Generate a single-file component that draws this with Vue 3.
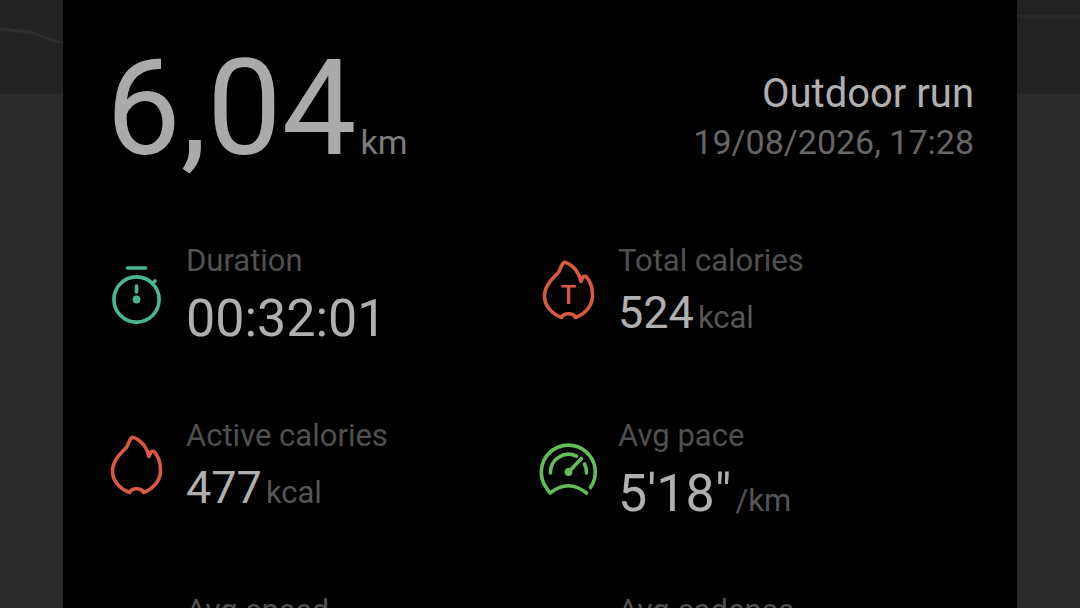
<script setup>
const metrics = [
  { icon: 'timer', label: 'Duration', value: '00:32:01', unit: '', large: true },
  { icon: 'total', label: 'Total calories', value: '524', unit: 'kcal', large: false },
  { icon: 'active', label: 'Active calories', value: '477', unit: 'kcal', large: false },
  { icon: 'pace', label: 'Avg pace', value: '5\'18"', unit: '/km', large: true },
  { icon: 'speed', label: 'Avg speed', value: '', unit: '', large: false },
  { icon: 'cadence', label: 'Avg cadence', value: '', unit: '', large: false },
]
</script>

<template>
  <div class="page">
    <div class="side" aria-hidden="true">
      <div class="map left">
        <svg class="trail" viewBox="0 0 63 94" preserveAspectRatio="none">
          <path d="M0 29C12 30 24 32 34 33C43 37 52 41 63 43" />
        </svg>
      </div>
    </div>
    <main class="panel">
      <header class="summary">
        <h1 class="distance"><span class="number">6,04</span><span class="km">km</span></h1>
        <div class="info">
          <p class="activity">Outdoor run</p>
          <time class="date" datetime="2026-08-19T17:28">19/08/2026, 17:28</time>
        </div>
      </header>
      <dl class="metrics">
        <div v-for="m in metrics" :key="m.label" class="metric">
          <svg class="icon" :class="m.icon" viewBox="0 0 60 60" aria-hidden="true">
            <g v-if="m.icon === 'timer'">
              <path d="M21.500 2H39.500" />
              <circle cx="30.500" cy="33.500" r="22.600" />
              <path d="M46.500 17.500L49 15M30.500 20V26" />
              <circle class="dot" cx="30.500" cy="33.500" r="3.900" />
            </g>
            <g v-else-if="m.icon === 'pace'">
              <path d="M52.500 46.500A27 27 0 1 0 8.500 47L12 52Q30.500 37.500 48.500 52" />
              <path d="M12.500 32A18 18 0 0 1 38.500 15.200M46.500 23Q48.500 27 48.500 32M30.500 31L43.500 17.500" />
              <circle class="dot" cx="30.500" cy="31" r="3.900" />
            </g>
            <g v-else-if="m.icon === 'total' || m.icon === 'active'">
              <path d="M26.500 1.200C23 3 23 8 20 12C14 18 6.500 25 6.500 35C6.500 45 14 53 23.500 56.500C25.500 51.500 35.500 51.500 37.500 56.500C47 53 54.500 45 54.500 34.500C54.500 26 51.500 19 48 15.500Q45 14.500 44.500 17L43 20.500C42 16 40.500 12.500 37.500 8.500C33.500 4 30 2 26.500 1.200Z" />
              <text v-if="m.icon === 'total'" x="30.500" y="43" text-anchor="middle">T</text>
            </g>
          </svg>
          <div class="text">
            <dt>{{ m.label }}</dt>
            <dd :class="{ large: m.large }">
              <span v-if="m.value" class="value">{{ m.value }}</span><span v-if="m.unit" class="unit">{{ m.unit }}</span>
            </dd>
          </div>
        </div>
      </dl>
    </main>
    <div class="side" aria-hidden="true">
      <div class="map right"></div>
    </div>
  </div>
</template>

<style>
body {
  margin: 0;
  background: #2a2a2a;
}
</style>

<style scoped>
.page {
  display: grid;
  grid-template-columns: 63px minmax(0, 1fr) 63px;
  height: 100vh;
  overflow: hidden;
  background: #2a2a2a;
  font-family: Roboto, "Liberation Sans", sans-serif;
}
.map {
  height: 94px;
  background: #222;
}
.left {
  border-bottom-right-radius: 4px;
}
.right {
  box-sizing: border-box;
  padding-top: 15px;
}
.right::before {
  content: "";
  display: block;
  height: 3px;
  background: #292929;
}
.trail {
  display: block;
  width: 100%;
  height: 100%;
  fill: none;
  stroke: #2d2d2d;
  stroke-width: 3;
}
.panel {
  padding: 31px 43px 0;
  background: #000;
}
.summary {
  display: flex;
  justify-content: space-between;
  align-items: last baseline;
}
.distance,
.activity,
.metrics,
dd {
  margin: 0;
}
.distance {
  display: flex;
  align-items: baseline;
  gap: 4px;
  font-weight: 400;
}
.number {
  font-size: 133px;
  color: #aaa;
}
.km {
  font-size: 34px;
  color: #7c7c7c;
}
.info {
  display: flex;
  flex-direction: column;
  align-items: flex-end;
  gap: 5px;
}
.activity {
  font-size: 40px;
  color: #b0b0b0;
}
.date {
  font-size: 34px;
  color: #666;
}
.metrics {
  display: grid;
  grid-template-columns: 1fr 1fr;
  grid-auto-rows: minmax(107px, auto);
  row-gap: 68px;
  align-items: start;
  padding: 56px 4px 0 0;
}
.metric {
  display: flex;
  align-items: center;
  gap: 20px;
}
.icon {
  flex: none;
  width: 60px;
  height: 60px;
  overflow: visible;
  fill: none;
  stroke: currentColor;
  stroke-width: 3.6;
  stroke-linecap: round;
  stroke-linejoin: round;
}
.dot,
.icon text {
  fill: currentColor;
  stroke: none;
}
.icon text {
  font-size: 26px;
  font-weight: 500;
}
.timer {
  color: #49b693;
}
.total,
.active {
  color: #da5941;
}
.pace {
  color: #63bd58;
}
dt {
  font-size: 31px;
  color: #505050;
}
dd {
  display: flex;
  align-items: baseline;
  gap: 4px;
  min-height: 53px;
  margin-top: 7px;
}
dd.large {
  margin-top: 9px;
}
.value {
  font-size: 45px;
  color: #b0b0b0;
}
.large .value {
  font-size: 52px;
}
.unit {
  font-size: 31px;
  color: #555;
}
</style>
